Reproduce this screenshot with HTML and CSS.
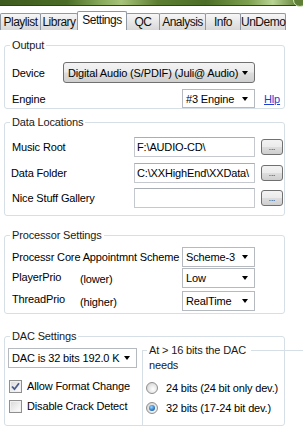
FILE: index.html
```html
<!DOCTYPE html>
<html lang="en">
<head>
  <meta charset="UTF-8" />
  <title>Settings</title>
  <link rel="stylesheet" href="styles.css">
</head>
<body>
  <div class="titlebar"><span class="orb"></span></div>

  <div class="tabs">
    <div class="tab w-playlist">Playlist</div>
    <div class="tab w-library">Library</div>
    <div class="tab active w-settings">Settings</div>
    <div class="tab w-qc">QC</div>
    <div class="tab w-analysis">Analysis</div>
    <div class="tab w-info">Info</div>
    <div class="tab w-undemo">UnDemo</div>
  </div>

  <fieldset class="group g-output">
    <legend>Output</legend>
    <div class="row r-device">
      <span class="lbl lbl-device">Device</span>
      <div class="combo combo-btn w-device">Digital Audio (S/PDIF) (Juli@ Audio)<span class="arrow"></span></div>
    </div>
    <div class="row r-engine">
      <span class="lbl lbl-wide">Engine</span>
      <div class="combo w-small">#3 Engine<span class="arrow"></span></div>
      <a class="hlp" href="#">Hlp</a>
    </div>
  </fieldset>

  <fieldset class="group g-data">
    <legend>Data Locations</legend>
    <div class="row r-data1">
      <span class="lbl lbl-path">Music Root</span>
      <div class="textbox">F:\AUDIO-CD\</div>
      <div class="dots">...</div>
    </div>
    <div class="row r-data2">
      <span class="lbl lbl-path shift">Data Folder</span>
      <div class="textbox">C:\XXHighEnd\XXData\</div>
      <div class="dots">...</div>
    </div>
    <div class="row r-data3">
      <span class="lbl lbl-path">Nice Stuff Gallery</span>
      <div class="textbox"></div>
      <div class="dots">...</div>
    </div>
  </fieldset>

  <fieldset class="group g-proc">
    <legend>Processor Settings</legend>
    <div class="row r-proc1">
      <span class="lbl lbl-wide">Processr Core Appointmnt Scheme</span>
      <div class="combo w-small">Scheme-3<span class="arrow"></span></div>
    </div>
    <div class="row r-proc2">
      <span class="lbl lbl-prio up2">PlayerPrio</span>
      <span class="lbl lbl-note">(lower)</span>
      <div class="combo w-small">Low<span class="arrow"></span></div>
    </div>
    <div class="row r-proc3">
      <span class="lbl lbl-prio up5">ThreadPrio</span>
      <span class="lbl lbl-note">(higher)</span>
      <div class="combo w-small">RealTime<span class="arrow"></span></div>
    </div>
  </fieldset>

  <fieldset class="group g-dac">
    <legend>DAC Settings</legend>
    <div class="dac-cols">
      <div class="dac-left">
        <div class="combo w-dac">DAC is 32 bits 192.0 K<span class="arrow"></span></div>
        <div class="check-row first-check">
          <span class="checkbox checked">
            <svg width="9" height="9" viewBox="0 0 9 9"><path d="M1 4.5 L3.5 7.2 L8 1.3" fill="none" stroke="#4a5b8c" stroke-width="1.8"/></svg>
          </span>
          <span>Allow Format Change</span>
        </div>
        <div class="check-row">
          <span class="checkbox"></span>
          <span>Disable Crack Detect</span>
        </div>
      </div>
      <div class="inner-group">
        <div class="inner-title">At &gt; 16 bits the DAC needs</div>
        <div class="radio-row r-radio1">
          <span class="radio"></span>
          <span>24 bits (24 bit only dev.)</span>
        </div>
        <div class="radio-row">
          <span class="radio selected"><span class="dot"></span></span>
          <span>32 bits (17-24 bit dev.)</span>
        </div>
      </div>
    </div>
  </fieldset>
</body>
</html>
```

FILE: styles.css
```css
body {
  margin: 0;
  width: 303px;
  height: 432px;
  overflow: hidden;
  background: #fff;
  color: #000;
  font-family: "Liberation Sans", Arial, sans-serif;
  font-size: 11px;
  letter-spacing: -0.15px;
}

/* green window strip */
.titlebar {
  position: relative;
  height: 5px;
  border-bottom: 1px solid #2c4514;
  background: linear-gradient(90deg, #3d5b1e 0%, #4b6c27 22%, #86a858 33%, #a7c47a 40%, #5c7e32 52%, #4c6d27 68%, #7c9f4e 82%, #b9d493 90%, #6f8e45 97%);
}
.orb {
  position: absolute;
  right: -4px;
  top: -7px;
  width: 12px;
  height: 12px;
  border: 1px solid #d7e6c2;
  border-radius: 50%;
  background: #5f7f36;
}

/* tabs */
.tabs {
  display: flex;
  align-items: flex-end;
  height: 19px;
  margin-top: 5px;
}
.tab {
  box-sizing: border-box;
  height: 17px;
  margin-right: -1px;
  padding-top: 1px;
  border: 1px solid #8e99a3;
  border-bottom: none;
  border-radius: 2px 2px 0 0;
  background: linear-gradient(#f7f7f7, #e4e4e4 60%, #d8d8d8);
  font-size: 12px;
  letter-spacing: -0.5px;
  line-height: 14px;
  text-align: center;
  color: #111;
}
.tab.active {
  height: 19px;
  background: #fff;
  position: relative;
  z-index: 1;
}
.w-playlist { width: 41px; }
.w-library { width: 38px; }
.w-settings { width: 50px; }
.w-qc { width: 34px; }
.w-analysis { width: 47px; }
.w-info { width: 36px; }
.w-undemo { width: 46px; }

/* group boxes */
.group {
  box-sizing: border-box;
  width: 281px;
  min-width: 0;
  margin: 0 0 0 4px;
  padding: 0;
  border: 1px solid #d5dfe5;
  border-radius: 3px;
}
.group legend {
  margin-left: 5px;
  padding: 0 2px;
  line-height: 13px;
  color: #1a1a1a;
}
.g-output { margin-top: 9px; }
.g-data { margin-top: 7px; padding-bottom: 7px; }
.g-proc { margin-top: 13px; padding-bottom: 2px; }
.g-dac { margin-top: 16px; overflow: visible; }

.row {
  display: flex;
  align-items: center;
  height: 20px;
  padding-left: 7px;
}
.r-device { margin-top: 10px; height: 21px; }
.r-engine { margin-top: 6px; height: 19px; }
.r-data1 { margin-top: 8px; }
.r-data2 { margin-top: 6px; }
.r-data3 { margin-top: 5px; }
.r-proc1 { margin-top: 5px; }
.r-proc2 { margin-top: 1px; }
.r-proc3 { margin-top: 3px; }

.lbl { flex: none; }
.lbl-device { width: 51px; }
.lbl-wide { width: 170px; }
.lbl-path { width: 122px; }
.lbl-prio { width: 68px; }
.lbl-note { width: 102px; padding-top: 2px; }
.up2 { margin-bottom: 2px; }
.up5 { margin-bottom: 5px; }
.shift { margin-left: -1px; margin-right: 1px; }

/* drop-down boxes */
.combo {
  box-sizing: border-box;
  display: flex;
  align-items: center;
  height: 100%;
  padding-left: 3px;
  border: 1px solid #b5b9c0;
  background: #fff;
  white-space: nowrap;
}
.combo-btn {
  padding-left: 4px;
  border-color: #707070;
  border-radius: 3px;
  background: linear-gradient(#f3f3f3, #ebebeb 48%, #dddddd 52%, #cfcfcf);
}
.w-device { width: 192px; }
.w-small { width: 73px; }
.w-dac { width: 129px; height: 20px; margin-top: 5px; }
.arrow {
  flex: none;
  margin-left: auto;
  margin-right: 6px;
  width: 0;
  height: 0;
  border-left: 3.5px solid transparent;
  border-right: 3.5px solid transparent;
  border-top: 4px solid #000;
}
.hlp {
  margin-left: 9px;
  color: #1f3fd0;
  text-decoration: underline;
}

/* path boxes */
.textbox {
  box-sizing: border-box;
  width: 121px;
  height: 100%;
  padding: 3px 0 0 2px;
  border: 1px solid #c5c9cf;
  border-top-color: #a9adb4;
  white-space: nowrap;
  overflow: hidden;
}
.dots {
  box-sizing: border-box;
  width: 22px;
  height: 16px;
  margin-left: 6px;
  border: 1px solid #707070;
  border-radius: 3px;
  background: linear-gradient(#f3f3f3, #ebebeb 48%, #dddddd 52%, #cfcfcf);
  font-size: 8px;
  line-height: 16px;
  text-align: center;
  letter-spacing: 0;
}

/* DAC group */
.dac-cols {
  display: flex;
  align-items: flex-start;
}
.dac-left {
  width: 129px;
  margin-left: 3px;
  flex: none;
}
.check-row {
  display: flex;
  align-items: center;
  height: 20px;
  gap: 5px;
  padding-left: 1px;
}
.first-check { margin-top: 8px; }
.checkbox {
  box-sizing: border-box;
  display: flex;
  align-items: center;
  justify-content: center;
  width: 13px;
  height: 13px;
  border: 1px solid #8f8f8f;
  background: linear-gradient(135deg, #d8d8d8, #f4f4f4 70%, #fff);
  box-shadow: inset 0 0 0 1px #f0f0f0;
  flex: none;
}
.inner-group {
  box-sizing: border-box;
  flex: none;
  width: 170px;
  height: 75px;
  margin: 7px 0 0 5px;
  border-top: 1px solid #d5dfe5;
  border-left: 1px solid #d5dfe5;
}
.inner-title {
  display: inline-block;
  width: 100px;
  margin: -8px 0 0 4px;
  padding: 0 2px;
  background: #fff;
  line-height: 15px;
  color: #1a1a1a;
}
.radio-row {
  display: flex;
  align-items: center;
  height: 20px;
  gap: 8px;
  padding-left: 3px;
}
.r-radio1 { margin-top: 5px; }
.radio {
  box-sizing: border-box;
  display: flex;
  align-items: center;
  justify-content: center;
  width: 12px;
  height: 12px;
  border: 1px solid #8f8f8f;
  border-radius: 50%;
  background: radial-gradient(circle at 60% 60%, #fff, #e8e8e8 45%, #c9c9c9);
  flex: none;
}
.dot {
  width: 6px;
  height: 6px;
  border-radius: 50%;
  background: radial-gradient(circle at 40% 35%, #9fd6ff, #2e7fc8 55%, #0d3f74);
}
```
